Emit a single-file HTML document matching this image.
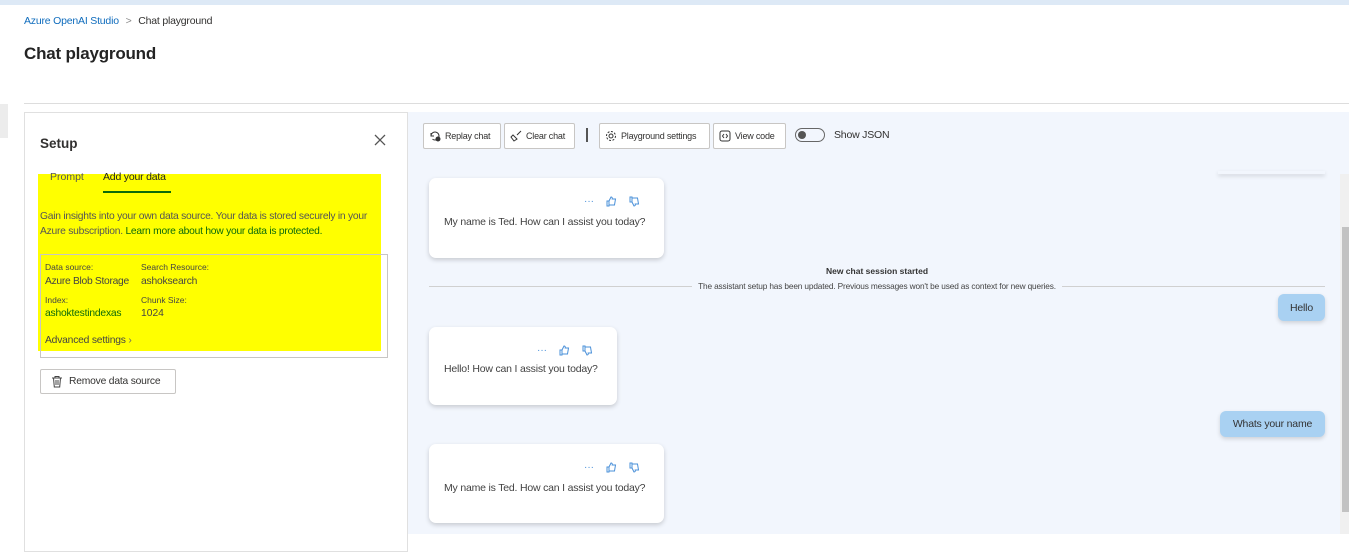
<!DOCTYPE html><html><head><style>
*{box-sizing:border-box;margin:0;padding:0}
body{width:1349px;height:534px;overflow:hidden;background:#fff;font-family:"Segoe UI","Liberation Sans",sans-serif;color:#323130;position:relative;font-size:12px}
.a{position:absolute;white-space:nowrap}
.btn{position:absolute;top:123px;height:26px;border:1px solid #c8c6c4;background:#fff;border-radius:2px;font-size:9px;letter-spacing:-0.2px;display:flex;align-items:center;padding:0 5px;gap:4px;color:#323130;white-space:nowrap}
.card{position:absolute;background:#fff;border-radius:7px;box-shadow:0 2px 5px rgba(0,0,0,.18)}
.card .t{position:absolute;left:15px;font-size:10.5px;letter-spacing:-0.2px;color:#424242;white-space:nowrap}
.icons{position:absolute;top:18px;font-size:10px;color:#4a90d9;display:flex;gap:12px;align-items:center}
.ub{position:absolute;background:#a9d1f2;border-radius:6px;box-shadow:0 2px 4px rgba(0,0,0,.15);font-size:10.5px;letter-spacing:-0.2px;color:#333;display:flex;align-items:center;justify-content:center}
</style></head><body>
<div class="a" style="left:0;top:0;width:1349px;height:5px;background:#dde9f6"></div>
<div class="a" style="left:0;top:104px;width:8px;height:34px;background:#ececec"></div>
<div class="a" style="left:24px;top:15px;font-size:10.5px;letter-spacing:-0.2px"><span style="color:#0f6cbd">Azure OpenAI Studio</span> <span style="color:#888;margin:0 4px">&gt;</span> Chat playground</div>
<div class="a" style="left:24px;top:44px;font-size:17px;font-weight:600;color:#242424;letter-spacing:-0.2px">Chat playground</div>
<div class="a" style="left:24px;top:103px;width:1325px;height:1px;background:#ddd"></div>
<div class="a" style="left:24px;top:112px;width:384px;height:440px;border:1px solid #e0e0e0;background:#fff"></div>
<div class="a" style="left:40px;top:136px;font-size:13.5px;font-weight:600">Setup</div>
<svg class="a" style="left:374px;top:134px" width="12" height="12" viewBox="0 0 12 12"><path d="M1 1L11 11M11 1L1 11" stroke="#555" stroke-width="1.3"/></svg>
<div class="a" style="left:38px;top:174px;width:343px;height:177px;background:#ffff00"></div>
<div class="a" style="left:50px;top:171px;font-size:10.5px;color:#555">Prompt</div>
<div class="a" style="left:103px;top:171px;font-size:10.5px;color:#222;letter-spacing:-0.2px">Add your data</div>
<div class="a" style="left:103px;top:191px;width:68px;height:2px;background:#0b6a0b"></div>
<div class="a" style="left:40px;top:209px;font-size:10.3px;letter-spacing:-0.25px;line-height:15px;color:#555;white-space:normal;width:335px">Gain insights into your own data source. Your data is stored securely in your Azure subscription. <span style="color:#0b6a0b">Learn more about how your data is protected.</span></div>
<div class="a" style="left:40px;top:254px;width:348px;height:104px;border:1px solid #c8c6c4"></div>
<div class="a" style="left:45px;top:262px;font-size:8.5px;color:#444">Data source:</div>
<div class="a" style="left:141px;top:262px;font-size:8.5px;color:#444">Search Resource:</div>
<div class="a" style="left:45px;top:276px;font-size:10.3px;letter-spacing:-0.3px;color:#444">Azure Blob Storage</div>
<div class="a" style="left:141px;top:276px;font-size:10.3px;letter-spacing:-0.2px;color:#444">ashoksearch</div>
<div class="a" style="left:45px;top:295px;font-size:8.5px;color:#444">Index:</div>
<div class="a" style="left:141px;top:295px;font-size:8.5px;color:#444">Chunk Size:</div>
<div class="a" style="left:45px;top:308px;font-size:10.3px;letter-spacing:-0.2px;color:#0b6a0b">ashoktestindexas</div>
<div class="a" style="left:141px;top:308px;font-size:10.3px;color:#444">1024</div>
<div class="a" style="left:45px;top:335px;font-size:10.3px;letter-spacing:-0.2px;color:#444">Advanced settings <span style="color:#666">›</span></div>
<div class="a" style="left:40px;top:369px;width:136px;height:25px;border:1px solid #c8c6c4;border-radius:2px;font-size:10.3px;letter-spacing:-0.2px;display:flex;align-items:center;padding-left:10px;gap:6px"><svg width="12" height="13" viewBox="0 0 12 13"><path d="M1 3h10M4 3V1.5h4V3M2.5 3l.8 9h5.4l.8-9M5 5v5M7 5v5" stroke="#444" fill="none" stroke-width="1"/></svg>Remove data source</div>
<div class="a" style="left:408px;top:112px;width:941px;height:422px;background:#f2f6fd"></div>
<div class="btn" style="left:423px;width:78px"><svg width="12" height="12" viewBox="0 0 12 12"><path d="M2 6a4 4 0 1 1 1.5 3.1M2 3v3h3" stroke="#333" fill="none"/><circle cx="9" cy="9" r="2.5" fill="#333"/></svg>Replay chat</div>
<div class="btn" style="left:504px;width:71px"><svg width="12" height="12" viewBox="0 0 12 12"><path d="M11 1L7 5M3 5l4 4-3 2-3-4z" stroke="#333" fill="none"/></svg>Clear chat</div>
<div class="a" style="left:586px;top:128px;width:2px;height:14px;background:#555"></div>
<div class="btn" style="left:599px;width:111px"><svg width="12" height="12" viewBox="0 0 12 12"><circle cx="6" cy="6" r="2" stroke="#333" fill="none"/><circle cx="6" cy="6" r="4.5" stroke="#333" fill="none" stroke-dasharray="2 1.5"/></svg>Playground settings</div>
<div class="btn" style="left:713px;width:73px"><svg width="12" height="12" viewBox="0 0 12 12"><rect x="1" y="1" width="10" height="10" rx="2" stroke="#333" fill="none"/><path d="M5 4L3.5 6 5 8M7 4l1.5 2L7 8" stroke="#333" fill="none"/></svg>View code</div>
<div class="a" style="left:795px;top:128px;width:30px;height:14px;border:1px solid #666;border-radius:7px"><div style="position:absolute;left:2px;top:2px;width:8px;height:8px;border-radius:50%;background:#555"></div></div>
<div class="a" style="left:834px;top:129px;font-size:10.5px;letter-spacing:-0.2px">Show JSON</div>
<div class="a" style="left:1218px;top:171px;width:107px;height:3px;box-shadow:0 2px 4px rgba(0,0,0,.15)"></div>
<div class="a" style="left:1340px;top:174px;width:9px;height:360px;background:#f0f0f0"></div>
<div class="a" style="left:1342px;top:227px;width:7px;height:285px;background:#c2c2c2"></div>
<div class="card" style="left:429px;top:178px;width:235px;height:80px"><div class="icons" style="left:155px">···<svg width="11" height="11" viewBox="0 0 11 11"><path d="M1 5h2v5H1zM3 5l2-4c1 0 1.5.6 1.2 2H9.5l-1 6H3" stroke="#4a90d9" fill="none"/></svg><svg width="11" height="11" viewBox="0 0 11 11"><path d="M1 6h2V1H1zM3 6l2 4c1 0 1.5-.6 1.2-2H9.5l-1-6H3" stroke="#4a90d9" fill="none"/></svg></div><div class="t" style="top:38px">My name is Ted. How can I assist you today?</div></div>
<div class="a" style="left:429px;top:266px;width:896px;text-align:center;font-size:8.5px;font-weight:700;color:#333">New chat session started</div>
<div class="a" style="left:429px;top:286px;width:896px;height:1px;background:#d0d0d0"></div>
<div class="a" style="left:429px;top:281px;width:896px;text-align:center;font-size:8.3px;letter-spacing:-0.15px;color:#444"><span style="background:#f2f6fd;padding:0 6px">The assistant setup has been updated. Previous messages won't be used as context for new queries.</span></div>
<div class="ub" style="left:1278px;top:294px;width:47px;height:27px">Hello</div>
<div class="card" style="left:429px;top:327px;width:188px;height:78px"><div class="icons" style="left:108px">···<svg width="11" height="11" viewBox="0 0 11 11"><path d="M1 5h2v5H1zM3 5l2-4c1 0 1.5.6 1.2 2H9.5l-1 6H3" stroke="#4a90d9" fill="none"/></svg><svg width="11" height="11" viewBox="0 0 11 11"><path d="M1 6h2V1H1zM3 6l2 4c1 0 1.5-.6 1.2-2H9.5l-1-6H3" stroke="#4a90d9" fill="none"/></svg></div><div class="t" style="top:36px">Hello! How can I assist you today?</div></div>
<div class="ub" style="left:1220px;top:411px;width:105px;height:26px">Whats your name</div>
<div class="card" style="left:429px;top:444px;width:235px;height:79px"><div class="icons" style="left:155px">···<svg width="11" height="11" viewBox="0 0 11 11"><path d="M1 5h2v5H1zM3 5l2-4c1 0 1.5.6 1.2 2H9.5l-1 6H3" stroke="#4a90d9" fill="none"/></svg><svg width="11" height="11" viewBox="0 0 11 11"><path d="M1 6h2V1H1zM3 6l2 4c1 0 1.5-.6 1.2-2H9.5l-1-6H3" stroke="#4a90d9" fill="none"/></svg></div><div class="t" style="top:38px">My name is Ted. How can I assist you today?</div></div>
</body></html>
